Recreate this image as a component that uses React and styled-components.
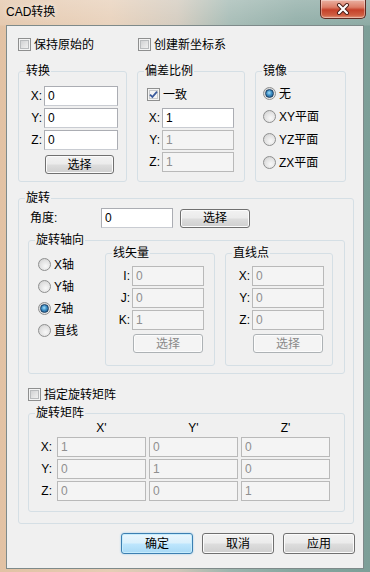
import styled, { createGlobalStyle, css } from 'styled-components';

const GlobalStyle = createGlobalStyle`
	html, body {
		margin: 0;
		padding: 0;
		width: 370px;
		height: 572px;
		overflow: hidden;
	}
	* { box-sizing: border-box; }
`;

const font = `"Liberation Sans", "Noto Sans CJK SC", sans-serif`;

const Window = styled.div`
	width: 370px;
	height: 572px;
	display: flex;
	flex-direction: column;
	font-family: ${font};
	font-size: 12px;
	line-height: 14px;
	color: #000;
	background:
		linear-gradient(180deg, rgba(255,255,255,0.28) 0px, rgba(255,255,255,0.12) 25px, rgba(0,0,0,0) 26px),
		linear-gradient(90deg, #e2c2a4 0%, #e6cdb5 30%, #cfc6b8 48%, #9db5ae 62%, #86a69f 80%, #7d9f98 100%);
`;

const TitleBar = styled.div`
	height: 25px;
	display: flex;
	align-items: flex-start;
	justify-content: space-between;
`;

const TitleText = styled.span`
	margin: 5px 0 0 6px;
	text-shadow: 0 0 6px rgba(255,255,255,0.9);
`;

const CloseButton = styled.div`
	width: 46px;
	height: 19px;
	margin-right: 4px;
	display: flex;
	align-items: center;
	justify-content: center;
	border: 1px solid #5e2a22;
	border-top: none;
	border-radius: 0 0 5px 5px;
	background: linear-gradient(180deg, #eab1a2 0%, #dc7e68 40%, #c5412a 55%, #cf5f42 85%, #e39a80 100%);
	box-shadow: inset 0 0 0 1px rgba(255,255,255,0.35);
`;

const Client = styled.div`
	width: 358px;
	height: 544px;
	margin-left: 6px;
	border: 1px solid #7e8a8a;
	background: #f0f0f0;
	display: flex;
	flex-direction: column;
	padding: 0 8px 0 11px;
`;

const CheckRow = styled.div`
	display: flex;
	margin-top: 12px;
	height: 13px;
`;

const CheckItem = styled.label`
	display: flex;
	align-items: center;
	height: 13px;
	gap: 3px;
	width: ${p => p.$w ? `${p.$w}px` : 'auto'};
	margin: ${p => p.$m || '0'};
	white-space: nowrap;
`;

const Box = styled.span`
	width: 13px;
	height: 13px;
	flex: none;
	display: flex;
	align-items: center;
	justify-content: center;
	border: 1px solid #8e8f8f;
	background: #f4f4f4;
	box-shadow: inset 0 0 0 1px #f4f4f4, inset 0 0 0 2px #c9cbcd;
	${p => !p.$checked && css`
		background: linear-gradient(135deg, #c8c9cb 0%, #e6e6e6 60%, #f7f7f7 100%);
		box-shadow: inset 0 0 0 1px #f3f3f3, inset 0 0 0 2px #b9bbbd;
	`}
`;

const RadioItem = styled.label`
	display: flex;
	align-items: center;
	height: 13px;
	gap: 3px;
	margin-bottom: ${p => p.$gap}px;
	white-space: nowrap;
`;

const RadioDot = styled.span`
	width: 13px;
	height: 13px;
	flex: none;
	border-radius: 50%;
	border: 1px solid #8e8f8f;
	background: radial-gradient(circle at 60% 65%, #f8f8f8 0%, #e2e2e2 55%, #c9c9c9 100%);
	display: flex;
	align-items: center;
	justify-content: center;
	&::after {
		content: '';
		display: ${p => p.$checked ? 'block' : 'none'};
		width: 7px;
		height: 7px;
		border-radius: 50%;
		background: radial-gradient(circle at 45% 40%, #a6e1fb 0%, #3b8cc4 45%, #15507f 100%);
		border: 1px solid #1d3f62;
	}
`;

const GroupRow = styled.div`
	display: flex;
	gap: 10px;
	margin-top: 13px;
`;

const Group = styled.fieldset`
	margin: ${p => p.$m || '0'};
	padding: 0;
	min-width: 0;
	width: ${p => p.$w}px;
	height: ${p => p.$h}px;
	flex: none;
	border: 1px solid #d5dfe5;
	border-radius: 3px;
`;

const Legend = styled.legend`
	margin-left: 6px;
	padding: 0 1px;
	line-height: 14px;
	font-size: 12px;
`;

const GroupBody = styled.div`
	padding: ${p => p.$pad};
	display: flex;
	flex-direction: ${p => p.$row ? 'row' : 'column'};
	align-items: flex-start;
`;

const FieldRow = styled.div`
	display: flex;
	align-items: center;
	gap: 2px;
	height: 20px;
	margin: ${p => p.$m || '0 0 2px 0'};
`;

const FieldLabel = styled.span`
	width: ${p => p.$w}px;
	text-align: ${p => p.$left ? 'left' : 'right'};
	flex: none;
	white-space: nowrap;
`;

const TextInput = styled.input`
	width: ${p => p.$w}px;
	height: ${p => p.$h || 20}px;
	flex: none;
	margin: 0;
	padding: 0 0 0 3px;
	font-family: ${font};
	font-size: 12px;
	color: #000;
	background: #fff;
	border: 1px solid #abadb3;
	border-bottom-color: #c9ccd2;
	outline: none;
	&:disabled {
		background: #f4f4f4;
		color: #8f8f8f;
		border-color: #b9b9b9;
	}
`;

const Button = styled.button`
	width: ${p => p.$w}px;
	height: ${p => p.$h}px;
	flex: none;
	margin: ${p => p.$m || '0'};
	padding: 0;
	font-family: ${font};
	font-size: 12px;
	line-height: 14px;
	color: #000;
	border: 1px solid #707070;
	border-radius: 3px;
	background: linear-gradient(180deg, #f2f2f2 0%, #ebebeb 48%, #dddddd 52%, #cfcfcf 100%);
	box-shadow: inset 0 0 0 1px #fbfbfb;
	${p => p.$primary && css`
		border-color: #3c7fb1;
		background: linear-gradient(180deg, #eaf6fd 0%, #d9f0fc 48%, #bee6fd 52%, #a7d9f5 100%);
		box-shadow: inset 0 0 0 1px #c6ecfd, 0 0 2px #8cc6ec;
	`}
	&:disabled {
		color: #8a8a8a;
		border-color: #adb2b5;
		background: #f4f4f4;
		box-shadow: inset 0 0 0 1px #fcfcfc;
	}
`;

const AngleRow = styled(FieldRow)`
	gap: 0;
	margin: 3px 0 0 2px;
`;

const RadioCol = styled.div`
	width: 76px;
	flex: none;
	padding: 11px 0 0 9px;
`;

const SubGroups = styled.div`
	display: flex;
	gap: 10px;
	margin-top: -1px;
`;

const MatrixGrid = styled.div`
	display: grid;
	grid-template-columns: 25px 89px 89px 89px;
	grid-template-rows: 15px 20px 20px 20px;
	column-gap: 3px;
	row-gap: 2px;
	align-items: center;
`;

const ColHead = styled.span`
	text-align: center;
	font-size: 12px;
`;

const RowHead = styled.span`
	text-align: right;
	padding-right: 2px;
`;

const Footer = styled.div`
	display: flex;
	justify-content: flex-end;
	gap: 9px;
	margin-top: 9px;
`;

function Check({ checked, children, w, m }) {
	return (
		<CheckItem $w={w} $m={m}>
			<Box $checked={checked}>
				{checked && (
					<svg width="9" height="9" viewBox="0 0 9 9">
						<path d="M1 4.6 L3.4 7 L8 1.6" fill="none" stroke="#3a5a9c" strokeWidth="1.8" />
					</svg>
				)}
			</Box>
			{children}
		</CheckItem>
	);
}

function Radio({ checked, children, gap }) {
	return (
		<RadioItem $gap={gap}>
			<RadioDot $checked={checked} />
			{children}
		</RadioItem>
	);
}

function Field({ label, value, lw, iw, disabled }) {
	return (
		<FieldRow>
			<FieldLabel $w={lw}>{label}</FieldLabel>
			<TextInput $w={iw} defaultValue={value} disabled={disabled} />
		</FieldRow>
	);
}

const matrix = [
	['X:', '1', '0', '0'],
	['Y:', '0', '1', '0'],
	['Z:', '0', '0', '1'],
];

export default function App() {
	return (
		<>
			<GlobalStyle />
			<Window>
				<TitleBar>
					<TitleText>CAD转换</TitleText>
					<CloseButton>
						<svg width="14" height="12" viewBox="0 0 14 12">
							<path d="M3 2 L11 10 M11 2 L3 10" stroke="#4a1d16" strokeWidth="4" strokeLinecap="round" />
							<path d="M3 2 L11 10 M11 2 L3 10" stroke="#fff" strokeWidth="2.2" strokeLinecap="round" />
						</svg>
					</CloseButton>
				</TitleBar>

				<Client>
					<CheckRow>
						<Check w={120}>保持原始的</Check>
						<Check>创建新坐标系</Check>
					</CheckRow>

					<GroupRow>
						<Group $w={109} $h={118}>
							<Legend>转换</Legend>
							<GroupBody $pad="8px 0 0 8px">
								<Field label="X:" value="0" lw={15} iw={74} />
								<Field label="Y:" value="0" lw={15} iw={74} />
								<Field label="Z:" value="0" lw={15} iw={74} />
								<Button $w={69} $h={19} $m="3px 0 0 18px">选择</Button>
							</GroupBody>
						</Group>

						<Group $w={108} $h={118}>
							<Legend>偏差比例</Legend>
							<GroupBody $pad="10px 0 0 9px">
								<Check checked m="0 0 7px 0">一致</Check>
								<Field label="X:" value="1" lw={13} iw={72} />
								<Field label="Y:" value="1" lw={13} iw={72} disabled />
								<Field label="Z:" value="1" lw={13} iw={72} disabled />
							</GroupBody>
						</Group>

						<Group $w={91} $h={118}>
							<Legend>镜像</Legend>
							<GroupBody $pad="9px 0 0 7px">
								<Radio checked gap={10}>无</Radio>
								<Radio gap={10}>XY平面</Radio>
								<Radio gap={10}>YZ平面</Radio>
								<Radio gap={10}>ZX平面</Radio>
							</GroupBody>
						</Group>
					</GroupRow>

					<Group $w={336} $h={333} $m="9px 0 0 0">
						<Legend>旋转</Legend>
						<GroupBody $pad="0 0 0 9px">
							<AngleRow>
								<FieldLabel $w={71} $left>角度:</FieldLabel>
								<TextInput $w={72} defaultValue="0" />
								<Button $w={70} $h={19} $m="0 0 0 7px">选择</Button>
							</AngleRow>

							<Group $w={317} $h={141} $m="5px 0 0 0">
								<Legend>旋转轴向</Legend>
								<GroupBody $row $pad="0">
									<RadioCol>
										<Radio gap={9}>X轴</Radio>
										<Radio gap={9}>Y轴</Radio>
										<Radio checked gap={9}>Z轴</Radio>
										<Radio gap={9}>直线</Radio>
									</RadioCol>
									<SubGroups>
										<Group $w={110} $h={120}>
											<Legend>线矢量</Legend>
											<GroupBody $pad="6px 0 0 10px">
												<Field label="I:" value="0" lw={14} iw={72} disabled />
												<Field label="J:" value="0" lw={14} iw={72} disabled />
												<Field label="K:" value="1" lw={14} iw={72} disabled />
												<Button $w={70} $h={19} $m="2px 0 0 17px" disabled>选择</Button>
											</GroupBody>
										</Group>
										<Group $w={108} $h={120}>
											<Legend>直线点</Legend>
											<GroupBody $pad="6px 0 0 10px">
												<Field label="X:" value="0" lw={14} iw={72} disabled />
												<Field label="Y:" value="0" lw={14} iw={72} disabled />
												<Field label="Z:" value="0" lw={14} iw={72} disabled />
												<Button $w={70} $h={19} $m="2px 0 0 17px" disabled>选择</Button>
											</GroupBody>
										</Group>
									</SubGroups>
								</GroupBody>
							</Group>

							<Check m="14px 0 0 0">指定旋转矩阵</Check>

							<Group $w={317} $h={106} $m="5px 0 0 0">
								<Legend>旋转矩阵</Legend>
								<GroupBody $pad="0">
									<MatrixGrid>
										<span />
										<ColHead>X'</ColHead>
										<ColHead>Y'</ColHead>
										<ColHead>Z'</ColHead>
										{matrix.map(row => [
											<RowHead key={row[0]}>{row[0]}</RowHead>,
											...row.slice(1).map((v, i) => (
												<TextInput key={row[0] + i} $w={89} defaultValue={v} disabled />
											)),
										])}
									</MatrixGrid>
								</GroupBody>
							</Group>
						</GroupBody>
					</Group>

					<Footer>
						<Button $w={72} $h={21} $primary>确定</Button>
						<Button $w={72} $h={21}>取消</Button>
						<Button $w={72} $h={21}>应用</Button>
					</Footer>
				</Client>
			</Window>
		</>
	);
}
